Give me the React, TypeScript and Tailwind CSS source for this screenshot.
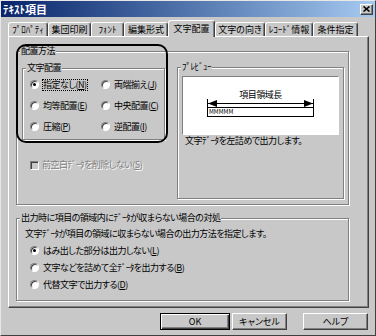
import React from "react";

// Win9x style "テキスト項目" property dialog, 文字配置 tab selected

const tabs = [
  { label: "ﾌﾟﾛﾊﾟﾃｨ", width: "w-[40px]" },
  { label: "集団印刷", width: "w-[43px]" },
  { label: "ﾌｫﾝﾄ", width: "w-[33px]" },
  { label: "編集形式", width: "w-[44px]" },
  { label: "文字配置", width: "w-[47px]", active: true },
  { label: "文字の向き", width: "w-[50px]" },
  { label: "ﾚｺｰﾄﾞ情報", width: "w-[48px]" },
  { label: "条件指定", width: "w-[45px]" },
];

const Radio = ({ checked }: { checked?: boolean }) => (
  <span className="flex h-[9px] w-[9px] shrink-0 items-center justify-center rounded-full border border-t-[#808080] border-l-[#808080] border-r-white border-b-white bg-white shadow-[inset_1px_1px_0_#404040]">
    {checked && <span className="h-[3px] w-[3px] rounded-full bg-black" />}
  </span>
);

const Label = (props: { text: string; mnemonic: string; focus?: boolean }) => (
  <span
    className={`leading-[10px] whitespace-nowrap ${
      props.focus ? "outline-1 outline-dotted outline-black" : ""
    }`}
  >
    {props.text}(<u>{props.mnemonic}</u>)
  </span>
);

// etched group box, caption sits on the top line
const Group = (props: {
  label: string;
  className: string;
  children?: React.ReactNode;
}) => (
  <div
    className={`relative shrink-0 border border-[#808080] pt-[5px] shadow-[1px_1px_0_#fff,inset_1px_1px_0_#fff] ${props.className}`}
  >
    <span className="absolute -top-[7px] left-[3px] bg-[#c8c8c8] px-[1px] leading-[12px] whitespace-nowrap">
      {props.label}
    </span>
    {props.children}
  </div>
);

const Button = (props: { label: string; width: string; isDefault?: boolean }) => (
  <button
    className={`flex h-[17px] items-center justify-center leading-none tracking-normal ${props.width} ${
      props.isDefault
        ? "border border-black shadow-[inset_1px_1px_0_#fff,inset_-1px_-1px_0_#404040,inset_-2px_-2px_0_#808080]"
        : "border border-t-white border-l-white border-r-[#404040] border-b-[#404040] shadow-[inset_-1px_-1px_0_#808080]"
    }`}
  >
    {props.label}
  </button>
);

const App = () => {
  return (
    <div className="relative flex h-[336px] w-[376px] flex-col overflow-hidden border border-t-[#e8e8e8] border-l-[#e8e8e8] border-r-[#404040] border-b-[#404040] bg-[#c8c8c8] font-['Noto_Sans_CJK_JP','Noto_Sans',sans-serif] text-[9px] tracking-[-0.5px] text-black [font-feature-settings:'palt']">
      {/* title bar */}
      <div className="flex h-[16px] shrink-0 items-center bg-linear-to-r from-[#0a246a] to-[#a6caf0] pl-[2px] pr-[2px]">
        <span className="text-[11px] leading-none font-bold tracking-normal text-white">ﾃｷｽﾄ項目</span>
        <div className="ml-auto flex h-[11px] w-[13px] items-center justify-center border border-t-white border-l-white border-r-[#404040] border-b-[#404040] bg-[#c8c8c8] shadow-[inset_-1px_-1px_0_#808080]">
          <svg width="7" height="6" viewBox="0 0 7 6">
            <path d="M0.5 0.5 L6.5 5.5 M6.5 0.5 L0.5 5.5" stroke="#000" strokeWidth="1.6" />
          </svg>
        </div>
      </div>

      {/* tabs */}
      <div className="ml-[7px] flex h-[19px] shrink-0 items-end tracking-normal">
        {tabs.map((tab) => (
          <div
            key={tab.label}
            className={`flex items-center justify-center rounded-t-[3px] border-t border-l border-r border-t-white border-l-white border-r-[#404040] shadow-[inset_-1px_0_0_#808080] whitespace-nowrap ${tab.width} ${
              tab.active
                ? "relative z-10 -mb-[1px] h-[17px] bg-[#c8c8c8] pb-[1px]"
                : "h-[14px]"
            }`}
          >
            {tab.label}
          </div>
        ))}
      </div>

      {/* tab panel */}
      <div className="relative ml-[7px] h-[272px] w-[361px] shrink-0 border border-t-white border-l-white border-r-[#404040] border-b-[#404040] shadow-[inset_-1px_-1px_0_#808080]">
        <Group label="配置方法" className="mt-[14px] ml-[7px] h-[154px] w-[333px]">
          <div className="flex items-start">
            <div className="ml-[5px] flex w-[143px] shrink-0 flex-col">
              <Group label="文字配置" className="mt-[11px] h-[72px] w-[143px]">
                <div className="grid grid-cols-[71px_71px] auto-rows-[21px] pl-[7px]">
                  <div className="flex items-center gap-[4px]">
                    <Radio checked />
                    <Label text="指定なし" mnemonic="N" focus />
                  </div>
                  <div className="flex items-center gap-[4px]">
                    <Radio />
                    <Label text="両端揃え" mnemonic="J" />
                  </div>
                  <div className="flex items-center gap-[4px]">
                    <Radio />
                    <Label text="均等配置" mnemonic="E" />
                  </div>
                  <div className="flex items-center gap-[4px]">
                    <Radio />
                    <Label text="中央配置" mnemonic="C" />
                  </div>
                  <div className="flex items-center gap-[4px]">
                    <Radio />
                    <Label text="圧縮" mnemonic="P" />
                  </div>
                  <div className="flex items-center gap-[4px]">
                    <Radio />
                    <Label text="逆配置" mnemonic="I" />
                  </div>
                </div>
              </Group>
              <div className="mt-[19px] ml-[8px] flex h-[12px] items-center gap-[3px]">
                <span className="h-[9px] w-[9px] shrink-0 border border-t-[#808080] border-l-[#808080] border-r-white border-b-white bg-[#c8c8c8] shadow-[inset_1px_1px_0_#404040]" />
                <span className="leading-[12px] whitespace-nowrap text-[#808080] [text-shadow:1px_1px_0_#fff]">
                  前空白ﾃﾞｰﾀを削除しない(<u>S</u>)
                </span>
              </div>
            </div>

            <Group label="ﾌﾟﾚﾋﾞｭｰ" className="mt-[10px] ml-[12px] h-[132px] w-[167px]">
              <div className="mt-[3px] ml-[4px] flex h-[59px] w-[157px] flex-col items-center border border-t-[#808080] border-l-[#808080] border-r-white border-b-white bg-white">
                <span className="pt-[13px] leading-[10px]">項目領域長</span>
                <svg width="107" height="9" viewBox="0 0 107 9" className="-mt-[1px]">
                  <path d="M0.5 0 V9 M106.5 0 V9 M1 4.5 H106" stroke="#000" strokeWidth="1" />
                  <polygon points="1,4.5 10,1 10,8" fill="#000" />
                  <polygon points="106,4.5 97,1 97,8" fill="#000" />
                </svg>
                <div className="-mt-[1px] flex h-[10px] w-[107px] items-center border border-black pl-[1px] text-[6px] leading-none tracking-normal">
                  MMMMM
                </div>
              </div>
              <div className="ml-[7px] leading-[12px] whitespace-nowrap">
                文字ﾃﾞｰﾀを左詰めで出力します。
              </div>
            </Group>
          </div>
        </Group>

        <Group
          label="出力時に項目の領域内にﾃﾞｰﾀが収まらない場合の対処"
          className="mt-[13px] ml-[7px] h-[83px] w-[333px]"
        >
          <div className="mt-[4px] pl-[8px] leading-[12px] whitespace-nowrap">
            文字ﾃﾞｰﾀが項目の領域に収まらない場合の出力方法を指定します。
          </div>
          <div className="mt-[2px] flex flex-col pl-[13px]">
            <div className="flex h-[17px] items-center gap-[4px]">
              <Radio checked />
              <Label text="はみ出した部分は出力しない" mnemonic="L" />
            </div>
            <div className="flex h-[17px] items-center gap-[4px]">
              <Radio />
              <Label text="文字などを詰めて全ﾃﾞｰﾀを出力する" mnemonic="B" />
            </div>
            <div className="flex h-[17px] items-center gap-[4px]">
              <Radio />
              <Label text="代替文字で出力する" mnemonic="D" />
            </div>
          </div>
        </Group>

        {/* highlight drawn over the 配置方法 area */}
        <div className="pointer-events-none absolute top-[7px] left-[7px] h-[99px] w-[152px] rounded-[10px] border-2 border-black" />
      </div>

      {/* buttons */}
      <div className="mt-[5px] ml-[159px] flex shrink-0">
        <Button label="OK" width="w-[70px]" isDefault />
        <div className="ml-[2px]">
          <Button label="キャンセル" width="w-[55px]" />
        </div>
        <div className="ml-[16px]">
          <Button label="ヘルプ" width="w-[65px]" />
        </div>
      </div>
    </div>
  );
};

export default App;
